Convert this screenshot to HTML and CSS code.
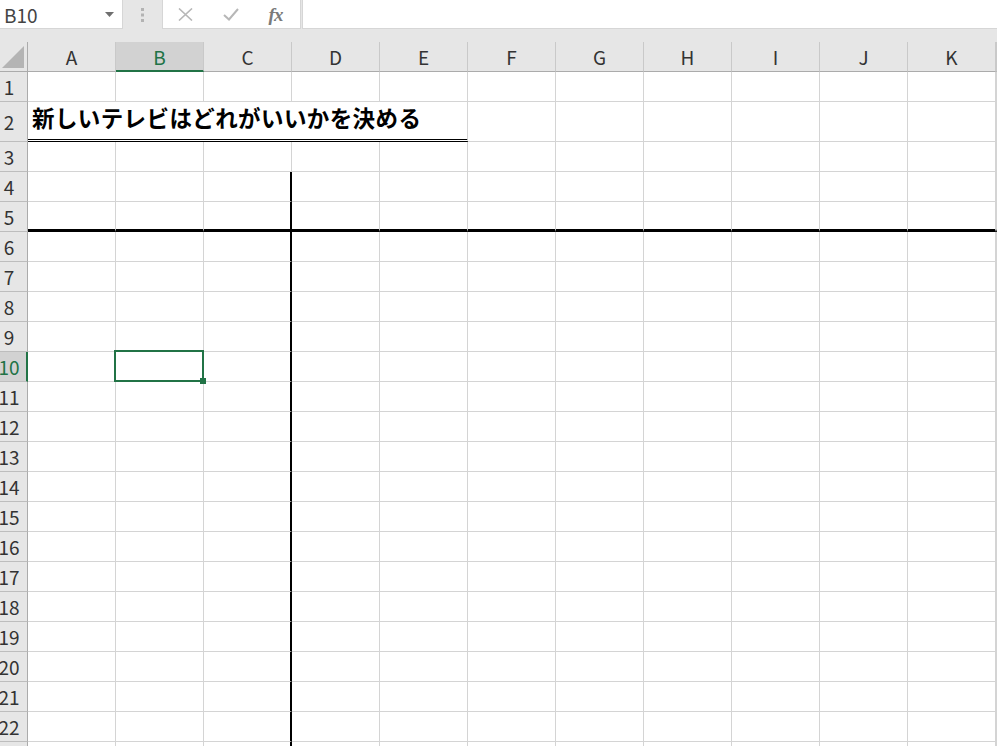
FILE: index.html
```html
<!DOCTYPE html>
<html lang="ja">
<head>
  <meta charset="UTF-8">
  <title>新しいテレビはどれがいいかを決める</title>
  <link rel="stylesheet" href="styles.css">
</head>
<body>
  <div class="formula-bar">
    <div class="name-box">
      <span>B10</span>
      <svg width="9" height="5" viewBox="0 0 9 5"><polygon points="0,0 9,0 4.5,5" fill="#6f6f6f"/></svg>
    </div>
    <div class="grip">
      <svg width="3" height="14" viewBox="0 0 3 14">
        <rect x="0" y="0" width="3" height="3" fill="#b3b3b3"/>
        <rect x="0" y="5.5" width="3" height="3" fill="#b3b3b3"/>
        <rect x="0" y="11" width="3" height="3" fill="#b3b3b3"/>
      </svg>
    </div>
    <div class="fx-box">
      <span class="fx-btn">
        <svg width="15" height="13" viewBox="0 0 15 13"><path d="M1 0.5 L14 12.5 M14 0.5 L1 12.5" stroke="#b7b7b7" stroke-width="1.6" fill="none"/></svg>
      </span>
      <span class="fx-btn">
        <svg width="16" height="13" viewBox="0 0 16 13"><path d="M1 7 L6 11.5 L15 1" stroke="#b7b7b7" stroke-width="2" fill="none"/></svg>
      </span>
      <span class="fx-btn fx">fx</span>
    </div>
    <div class="formula-input"></div>
  </div>

  <div class="sheet" id="sheet"></div>

  <script>
    const sheet = document.getElementById("sheet");
    const cols = "ABCDEFGHIJK".split("").concat([""]);

    function add(cls, text) {
      const d = document.createElement("div");
      d.className = cls;
      if (text) d.textContent = text;
      sheet.appendChild(d);
      return d;
    }

    const corner = add("corner");
    corner.innerHTML = '<svg width="27" height="29" viewBox="0 0 27 29"><polygon points="24,4 24,26 2,26" fill="#b4b4b4"/></svg>';

    cols.forEach(function(c) {
      add("col-head" + (c === "B" ? " selected" : ""), c);
    });

    // row 23 is only a sliver at the bottom edge, so no label
    for (let r = 1; r <= 23; r++) {
      add("row-head" + (r === 10 ? " selected" : ""), r < 23 ? String(r) : "");
      if (r === 2) {
        add("cell title", "新しいテレビはどれがいいかを決める");
        cols.slice(5).forEach(function() { add("cell"); });
        continue;
      }
      cols.forEach(function(c) {
        let cls = "cell";
        if (r === 5) cls += " thick-bottom";
        if (c === "C" && r >= 4) cls += " thick-right";
        if (c === "B" && r === 10) cls += " active";
        add(cls);
      });
    }
  </script>
</body>
</html>
```

FILE: styles.css
```css
* {
  margin: 0;
  padding: 0;
  box-sizing: border-box;
}
body {
  width: 997px;
  height: 746px;
  overflow: hidden;
  background: #e6e6e6;
  font-family: "Noto Sans CJK JP", "Noto Sans", sans-serif;
}

/* formula bar */
.formula-bar {
  height: 42px;
  display: flex;
  align-items: flex-start;
}
.name-box {
  width: 123px;
  height: 29px;
  background: #fff;
  border-right: 1px solid #d6d6d6;
  border-bottom: 1px solid #d6d6d6;
  display: flex;
  align-items: center;
  justify-content: space-between;
  padding: 0 8px 0 4px;
  font-size: 19px;
  line-height: 1;
  color: #444;
}
.grip {
  width: 39px;
  height: 29px;
  display: flex;
  align-items: center;
  justify-content: center;
}
.fx-box {
  width: 139px;
  height: 29px;
  background: #fff;
  border: 1px solid #d6d6d6;
  border-top: none;
  display: flex;
  align-items: center;
}
.fx-btn {
  width: 45px;
  display: flex;
  justify-content: center;
  align-items: center;
}
.fx {
  font-family: "Liberation Serif", serif;
  font-style: italic;
  font-weight: bold;
  font-size: 19px;
  line-height: 1;
  color: #7a7a7a;
  letter-spacing: -1px;
}
.formula-input {
  flex: 1;
  height: 29px;
  margin-left: 1px;
  background: #fff;
  border-left: 1px solid #d6d6d6;
  border-bottom: 1px solid #d6d6d6;
}

/* grid */
.sheet {
  display: grid;
  grid-template-columns: 28px repeat(11, 88px) 1fr;
  grid-template-rows: 30px 30px 40px repeat(21, 30px);
  background: #fff;
}
.corner {
  background: #e6e6e6;
  border-right: 1px solid #ababab;
  border-bottom: 1px solid #ababab;
}
.corner svg {
  display: block;
}
.col-head {
  background: #e6e6e6;
  border-right: 1px solid #c9c9c9;
  border-bottom: 1px solid #ababab;
  display: flex;
  align-items: center;
  justify-content: center;
  font-size: 19px;
  line-height: 1;
  color: #333;
}
.col-head.selected {
  background: #d2d2d2;
  color: #217346;
  border-bottom: 2px solid #217346;
}
.row-head {
  background: #e6e6e6;
  border-right: 1px solid #ababab;
  border-bottom: 1px solid #bdbdbd;
  display: flex;
  align-items: center;
  justify-content: center;
  padding-right: 9px;
  font-size: 19px;
  line-height: 1;
  color: #333;
}
.row-head.selected {
  background: #d2d2d2;
  color: #217346;
  border-right: 2px solid #217346;
  padding-right: 8px;
}
.cell {
  position: relative;
  background: #fff;
  border-right: 1px solid #d4d4d4;
  border-bottom: 1px solid #d4d4d4;
}
.title {
  grid-column: span 5;
  border-bottom: 3px double #000;
  display: flex;
  align-items: flex-end;
  padding: 0 0 11px 4px;
  font-size: 22.5px;
  font-weight: bold;
  letter-spacing: 0.4px;
  line-height: 1;
  white-space: nowrap;
  color: #000;
}
.thick-bottom {
  border-bottom: 3px solid #000;
}
.thick-right {
  border-right: 2px solid #000;
}
.active::before {
  content: "";
  position: absolute;
  top: -2px;
  left: -2px;
  right: -1px;
  bottom: -1px;
  border: 2px solid #217346;
  z-index: 2;
}
.active::after {
  content: "";
  position: absolute;
  right: -3px;
  bottom: -3px;
  width: 6px;
  height: 6px;
  background: #217346;
  z-index: 3;
}
```
